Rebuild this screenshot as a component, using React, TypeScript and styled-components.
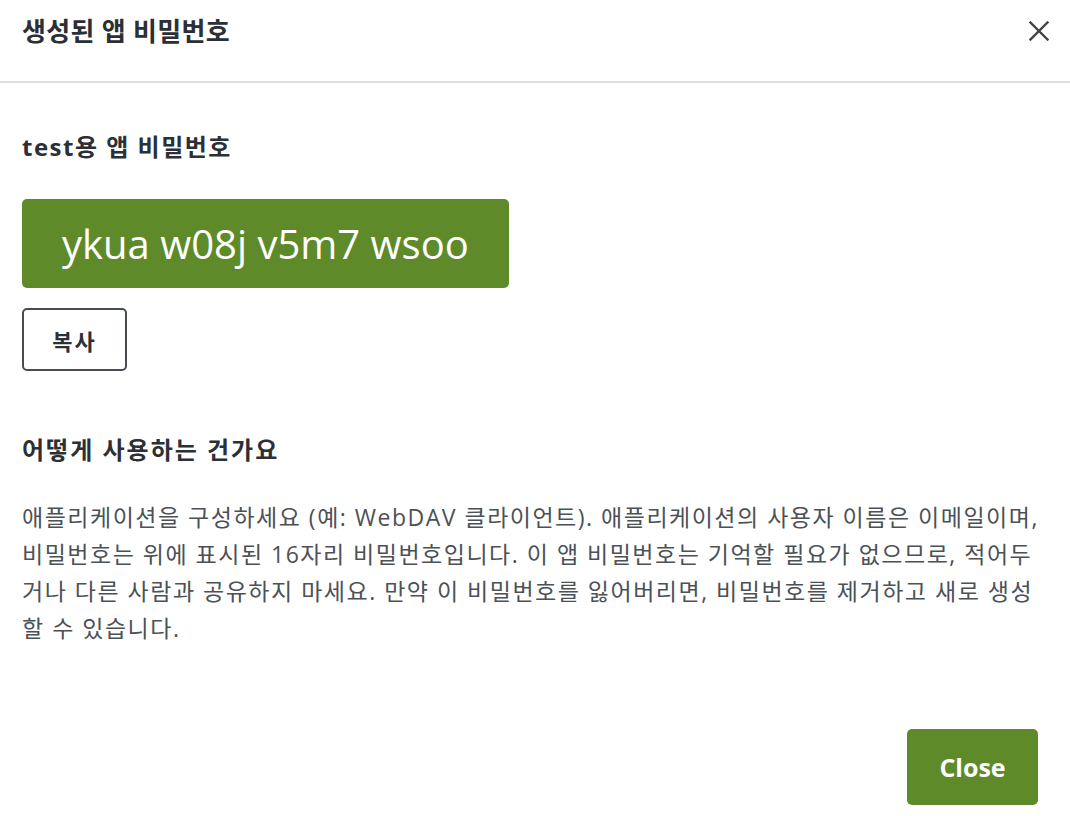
import React from "react";
import styled, { createGlobalStyle } from "styled-components";

const GlobalStyle = createGlobalStyle`
  html, body {
    margin: 0;
    padding: 0;
    background: #ffffff;
  }
  body {
    font-family: "Open Sans", "Noto Sans CJK KR", sans-serif;
    color: #2b3036;
  }
  * { box-sizing: border-box; }
`;

const Dialog = styled.div`
  width: 1070px;
  min-height: 816px;
  display: flex;
  flex-direction: column;
  background: #fff;
`;

const Header = styled.header`
  height: 83px;
  padding: 0 19px 0 22px;
  display: flex;
  align-items: center;
  justify-content: space-between;
  border-bottom: 2px solid #dedede;
`;

const Title = styled.h1`
  margin: 0 0 20px 0;
  font-size: 26px;
  font-weight: 700;
  line-height: 34px;
  letter-spacing: 0.3px;
  color: #2b3036;
`;

const IconButton = styled.button`
  border: none;
  background: transparent;
  padding: 0;
  margin: 0 0 20px 0;
  width: 24px;
  height: 24px;
  display: flex;
  align-items: center;
  justify-content: center;
  color: #3f454b;
  cursor: pointer;
`;

const Body = styled.main`
  padding: 48px 22px 0 22px;
  display: flex;
  flex-direction: column;
`;

const SectionTitle = styled.h2<{ $top?: number; $spacing?: number }>`
  margin: ${(p) => p.$top ?? 0}px 0 0 0;
  font-size: 24px;
  font-weight: 700;
  line-height: 31px;
  letter-spacing: ${(p) => p.$spacing ?? 1.5}px;
  color: #2b3036;
`;

const PasswordBox = styled.div`
  margin-top: 37px;
  align-self: flex-start;
  height: 89px;
  padding: 0 40px;
  display: flex;
  align-items: center;
  background: #5e8a29;
  border-radius: 5px;
  color: #ffffff;
  font-size: 40px;
  font-weight: 400;
`;

const OutlineButton = styled.button`
  margin-top: 20px;
  align-self: flex-start;
  width: 105px;
  height: 63px;
  padding: 0;
  border: 2px solid #474c52;
  border-radius: 5px;
  background: #fff;
  font-family: "Open Sans", "Noto Sans CJK KR", sans-serif;
  font-size: 22px;
  font-weight: 700;
  letter-spacing: 2px;
  color: #2b3036;
  cursor: pointer;
`;

const Paragraph = styled.p`
  margin: 34px 0 0 0;
  font-size: 23px;
  line-height: 37px;
  letter-spacing: 1.5px;
  color: #4b5157;
  white-space: nowrap;
`;

const Footer = styled.footer`
  display: flex;
  justify-content: flex-end;
  padding: 0 32px 0 0;
  margin-top: 82px;
`;

const PrimaryButton = styled.button`
  width: 131px;
  height: 76px;
  border: none;
  border-radius: 5px;
  background: #5e8a29;
  color: #fff;
  font-family: "Open Sans", "Noto Sans CJK KR", sans-serif;
  font-size: 25px;
  font-weight: 700;
  cursor: pointer;
`;

const CloseIcon = () => (
  <svg width="20" height="20" viewBox="0 0 20 20" fill="none">
    <path d="M1.5 1.5 L18.5 18.5 M18.5 1.5 L1.5 18.5" stroke="currentColor" strokeWidth="2.4" strokeLinecap="square" />
  </svg>
);

export default function App() {
  return (
    <>
      <GlobalStyle />
      <Dialog>
        <Header>
          <Title>생성된 앱 비밀번호</Title>
          <IconButton aria-label="닫기">
            <CloseIcon />
          </IconButton>
        </Header>
        <Body>
          <SectionTitle>test용 앱 비밀번호</SectionTitle>
          <PasswordBox>ykua w08j v5m7 wsoo</PasswordBox>
          <OutlineButton>복사</OutlineButton>
          <SectionTitle $top={63} $spacing={2}>어떻게 사용하는 건가요</SectionTitle>
          <Paragraph>
            애플리케이션을 구성하세요 (예: WebDAV 클라이언트). 애플리케이션의 사용자 이름은 이메일이며,
            <br />
            비밀번호는 위에 표시된 16자리 비밀번호입니다. 이 앱 비밀번호는 기억할 필요가 없으므로, 적어두
            <br />
            거나 다른 사람과 공유하지 마세요. 만약 이 비밀번호를 잃어버리면, 비밀번호를 제거하고 새로 생성
            <br />
            할 수 있습니다.
          </Paragraph>
        </Body>
        <Footer>
          <PrimaryButton>Close</PrimaryButton>
        </Footer>
      </Dialog>
    </>
  );
}
